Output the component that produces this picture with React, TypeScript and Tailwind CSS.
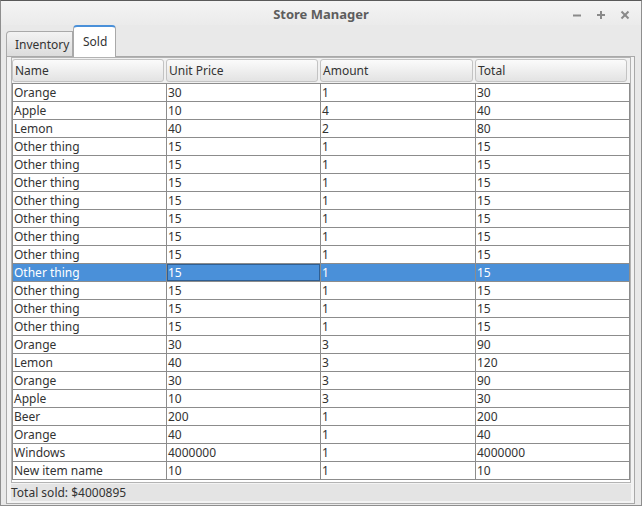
import React from "react";

type Row = [string, string, string, string];

const data: Row[] = [
  ["Orange", "30", "1", "30"],
  ["Apple", "10", "4", "40"],
  ["Lemon", "40", "2", "80"],
  ...Array.from({ length: 11 }, () => ["Other thing", "15", "1", "15"] as Row),
  ["Orange", "30", "3", "90"],
  ["Lemon", "40", "3", "120"],
  ["Orange", "30", "3", "90"],
  ["Apple", "10", "3", "30"],
  ["Beer", "200", "1", "200"],
  ["Orange", "40", "1", "40"],
  ["Windows", "4000000", "1", "4000000"],
  ["New item name", "10", "1", "10"],
];

const widths = ["w-[154px]", "w-[154px]", "w-[155px]", "w-[154px]"];
const headers = ["Name", "Unit Price", "Amount", "Total"];
const SELECTED = 10;

export default function App() {
  return (
    <div className="w-[642px] h-[506px] flex flex-col bg-[#e9e9e9] border border-[#8e8e8e] border-t-[#5a5a5a] font-['Noto_Sans',sans-serif] text-[12px] text-[#333] overflow-hidden">
      {/* Title bar */}
      <div className="relative h-[24px] shrink-0 flex items-center justify-center bg-gradient-to-b from-[#f4f4f4] to-[#ebebeb]">
        <span className="font-bold text-[13px] text-[#5d5d5d] leading-none pt-[2px]">Store Manager</span>
        <div className="absolute right-[11px] top-[9px] flex items-center gap-[14px]">
          <svg width="10" height="10" viewBox="0 0 10 10">
            <line x1="1" y1="5.5" x2="9" y2="5.5" stroke="#8a8a8a" strokeWidth="2" />
          </svg>
          <svg width="10" height="10" viewBox="0 0 10 10">
            <line x1="1" y1="5" x2="9" y2="5" stroke="#8a8a8a" strokeWidth="2" />
            <line x1="5" y1="1" x2="5" y2="9" stroke="#8a8a8a" strokeWidth="2" />
          </svg>
          <svg width="10" height="10" viewBox="0 0 10 10">
            <line x1="1.5" y1="1.5" x2="8.5" y2="8.5" stroke="#8a8a8a" strokeWidth="2" />
            <line x1="8.5" y1="1.5" x2="1.5" y2="8.5" stroke="#8a8a8a" strokeWidth="2" />
          </svg>
        </div>
      </div>

      {/* Tabs */}
      <div className="h-[31px] shrink-0 flex items-end pl-[5px] relative z-10">
        <div className="w-[67px] h-[25px] flex items-center pl-[8px] pt-[2px] bg-gradient-to-b from-[#f3f3f3] to-[#dcdcdc] border border-[#a9a9a9] border-b-0 rounded-tl-[4px] text-[#333]">
          Inventory
        </div>
        <div className="w-[43px] h-[32px] -mb-[1px] flex items-center pl-[9px] bg-white border border-[#a9a9a9] border-t-2 border-t-[#4a90d9] border-b-0 rounded-t-[4px] text-[#333]">
          Sold
        </div>
      </div>

      {/* Panel */}
      <div className="ml-[5px] w-[629px] h-[448px] shrink-0 border border-[#a9a9a9] bg-[#f3f3f3] pl-[4px] pr-[3px] flex flex-col">
        {/* Table frame */}
        <div className="w-[620px] h-[426px] border border-[#b3b3b3] bg-white flex flex-col">
          {/* Header */}
          <div className="h-[25px] flex bg-[#f1f1f1] py-[1px]">
            {headers.map((h, i) => (
              <div key={h} className={`${widths[i]} h-full pr-[2px]`}>
                <div className="h-full flex items-center pl-[2px] rounded-[3px] border border-[#c3c3c3] bg-gradient-to-b from-[#fbfbfb] to-[#e3e3e3] text-[#333]">
                  {h}
                </div>
              </div>
            ))}
          </div>
          {/* Body */}
          <div className="border-t border-l border-[#8c8c8c]">
            {data.map((r, ri) => {
              const sel = ri === SELECTED;
              return (
                <div
                  key={ri}
                  className={`h-[18px] flex border-b border-[#8c8c8c] ${sel ? "bg-[#4a90d9] text-white" : "bg-white text-[#333]"}`}
                >
                  {r.map((c, ci) => (
                    <div
                      key={ci}
                      className={`${widths[ci]} h-full border-r border-[#8c8c8c] pl-[1px] leading-[17px] whitespace-nowrap overflow-hidden ${sel && ci === 1 ? "shadow-[inset_0_0_0_1px_#2f5f93]" : ""}`}
                    >
                      {c}
                    </div>
                  ))}
                </div>
              );
            })}
          </div>
        </div>
        {/* Footer */}
        <div className="mt-[1px] w-[620px] h-[17px] bg-[#e4e4e4] flex items-center text-[#333] leading-none">
          Total sold: $4000895
        </div>
      </div>
    </div>
  );
}
